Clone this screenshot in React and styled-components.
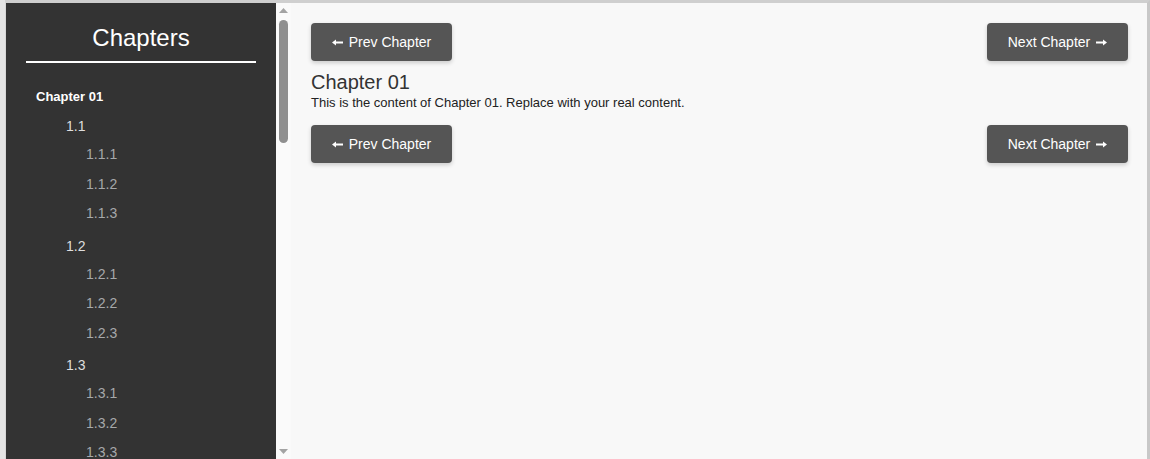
import React from "react";
import styled, {createGlobalStyle} from "styled-components";

const GlobalStyle = createGlobalStyle`
  html, body {
    margin: 0;
    padding: 0;
    background: #e4e4e4;
    font-family: "Liberation Sans", Arial, sans-serif;
  }
`

const Frame = styled.div`
  margin: 0 0 0 5px;
  border-top: 3px solid #cfcfcf;
  border-right: 3px solid #c8c8c8;
  border-left: 1px solid #d6d6d6;
  height: calc(100vh - 3px);
  display: flex;
  background: #f8f8f8;
  overflow: hidden;
`

const Sidebar = styled.aside`
  width: 285px;
  flex-shrink: 0;
  height: 100%;
  display: flex;
`

const SideContent = styled.div`
  width: 270px;
  height: 100%;
  overflow: hidden;
  background: #333;
`

//fake scrollbar, the headless browser hides the real one
const ScrollTrack = styled.div`
  width: 15px;
  height: 100%;
  display: flex;
  flex-direction: column;
  background: #fafafa;
`

const ScrollArrow = styled.div`
  height: 15px;
  display: flex;
  align-items: center;
  justify-content: center;
  flex-shrink: 0;
`

const ThumbArea = styled.div`
  flex: 1;
  padding: 2px 3px;
`

const Thumb = styled.div`
  height: 123px;
  border-radius: 5px;
  background: #8f8f8f;
`

const SideTitle = styled.h1`
  margin: 0 20px;
  padding: 21px 0 9px;
  font-size: 24px;
  line-height: 28px;
  font-weight: normal;
  color: #fff;
  text-align: center;
  border-bottom: 2px solid #fff;
`

const ChapterList = styled.ul`
  list-style: none;
  margin: 0;
  padding: 23px 0 0;
`

const ChapterItem = styled.li`
  margin-bottom: 8px;
`

const ChapterLink = styled.div`
  padding-left: 30px;
  margin-bottom: 5px;
  line-height: 22px;
  font-size: 13px;
  font-weight: bold;
  color: #fff;
`

const SubList = styled.ul`
  list-style: none;
  margin: 4px 0 0;
  padding: 0;
`

const SectionLink = styled.div`
  padding-left: ${p => p.$level === 2 ? 80 : 60}px;
  line-height: ${p => p.$level === 2 ? 29.5 : 27}px;
  font-size: 14px;
  color: ${p => p.$level === 2 ? "#a6a8aa" : "#dedede"};
`

const Main = styled.main`
  flex: 1;
  padding: 20px 19px 20px 20px;
  color: #333;
`

const NavRow = styled.div`
  display: flex;
  justify-content: space-between;
  margin-top: ${p => p.$top || 0}px;
`

const NavButton = styled.button`
  height: 38px;
  width: 141px;
  display: flex;
  align-items: center;
  justify-content: center;
  gap: 6px;
  border: none;
  border-radius: 4px;
  background: #555;
  color: #fff;
  font-family: "Liberation Sans", Arial, sans-serif;
  font-size: 14px;
  box-shadow: 0 2px 4px rgba(0, 0, 0, 0.18);
  cursor: pointer;
`

const Heading = styled.h2`
  margin: 10px 0 0;
  font-size: 20px;
  line-height: 23px;
  font-weight: normal;
  color: #333;
`

const Text = styled.p`
  margin: 1px 0 0;
  font-size: 13px;
  line-height: 16px;
  color: #222;
`

const chapters = ["01", "02", "03", "04"]
const sections = ["1", "2", "3"]

const Arrow = ({down}) => (
    <svg width="9" height="5" viewBox="0 0 9 5">
        <path d={down ? "M0 0 H9 L4.5 5 Z" : "M0 5 H9 L4.5 0 Z"} fill="#a3a3a3"/>
    </svg>
)

const LongArrow = ({right}) => (
    <svg width="11" height="7" viewBox="0 0 11 7" style={{transform: right ? "scaleX(-1)" : "none"}}>
        <path d="M0 3.5 L4 0.5 V2.5 H11 V4.5 H4 V6.5 Z" fill="#fff"/>
    </svg>
)

const Nav = ({top}) => (
    <NavRow $top={top}>
        <NavButton><LongArrow/>Prev Chapter</NavButton>
        <NavButton>Next Chapter<LongArrow right/></NavButton>
    </NavRow>
)

const App = () => {

    return (
        <>
            <GlobalStyle/>
            <Frame>
                <Sidebar>
                    <SideContent>
                        <SideTitle>Chapters</SideTitle>
                        <ChapterList>
                            {chapters.map((c) => {
                                const n = parseInt(c, 10)
                                return (
                                    <ChapterItem key={c}>
                                        <ChapterLink>Chapter {c}</ChapterLink>
                                        {sections.map((s) => (
                                            <SubList key={s}>
                                                <li>
                                                    <SectionLink $level={1}>{n}.{s}</SectionLink>
                                                    {sections.map((t) => (
                                                        <SectionLink key={t} $level={2}>{n}.{s}.{t}</SectionLink>
                                                    ))}
                                                </li>
                                            </SubList>
                                        ))}
                                    </ChapterItem>
                                )
                            })}
                        </ChapterList>
                    </SideContent>
                    <ScrollTrack>
                        <ScrollArrow><Arrow/></ScrollArrow>
                        <ThumbArea><Thumb/></ThumbArea>
                        <ScrollArrow><Arrow down/></ScrollArrow>
                    </ScrollTrack>
                </Sidebar>

                <Main>
                    <Nav/>
                    <Heading>Chapter 01</Heading>
                    <Text>This is the content of Chapter 01. Replace with your real content.</Text>
                    <Nav top={14}/>
                </Main>
            </Frame>
        </>
    )
}

export default App;
